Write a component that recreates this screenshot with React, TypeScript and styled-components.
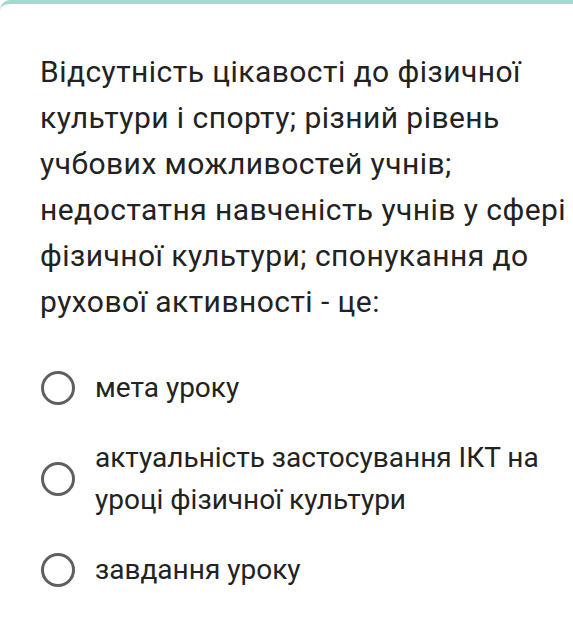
import React from 'react';
import styled, { createGlobalStyle } from 'styled-components';

const GlobalStyle = createGlobalStyle`
    html, body {
        margin: 0;
        padding: 0;
        background: #ffffff;
    }
    body {
        font-family: Roboto, "Noto Sans", "Liberation Sans", sans-serif;
        color: #212121;
    }
`

const Card = styled.div`
    width: 573px;
    height: 627px;
    box-sizing: border-box;
    border-top: 4px solid #a3d9cf;
    border-top-left-radius: 10px;
    background: #ffffff;
    padding: 45px 0 0 40px;
    overflow: hidden;
`

const Question = styled.div`
    font-size: 30px;
    line-height: 46px;
    color: #222222;
    width: 528px;
    letter-spacing: 0.45px;
`

const Options = styled.div`
    display: flex;
    flex-direction: column;
    gap: 28px;
    margin-top: 42px;
`

const Option = styled.label`
    display: flex;
    align-items: center;
    gap: 20px;
`

const Radio = styled.span`
    flex: 0 0 auto;
    width: 28px;
    height: 28px;
    border: 3px solid #5f5f5f;
    border-radius: 50%;
    margin-left: 1px;
`

const OptionText = styled.span`
    font-size: 28px;
    line-height: 42px;
    color: #222222;
    width: 460px;
`

const answers = [
    "мета уроку",
    "актуальність застосування ІКТ на уроці фізичної культури",
    "завдання уроку"
];

export default function App() {
    return (
        <>
            <GlobalStyle />
            <Card>
                <Question>
                    Відсутність цікавості до фізичної культури і спорту; різний рівень учбових можливостей учнів; недостатня навченість учнів у сфері фізичної культури; спонукання до рухової активності - це:
                </Question>
                <Options>
                    {answers.map((text, index) => (
                        <Option key={index}>
                            <Radio />
                            <OptionText>{text}</OptionText>
                        </Option>
                    ))}
                </Options>
            </Card>
        </>
    );
}
